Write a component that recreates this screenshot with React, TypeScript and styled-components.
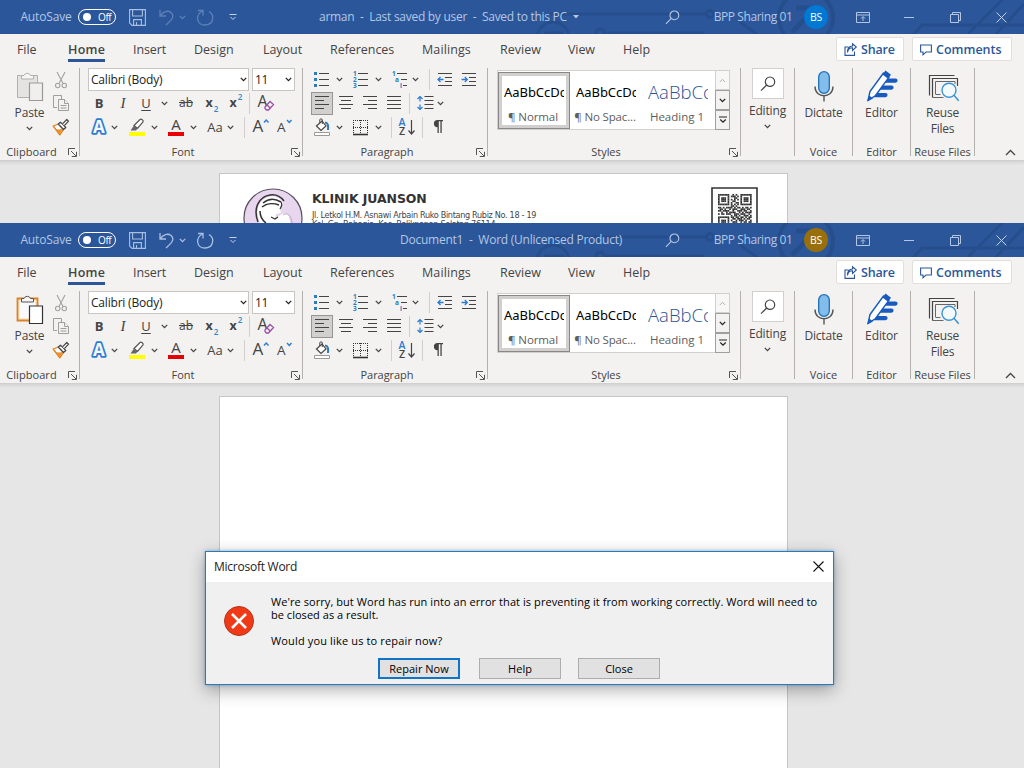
import React from "react";
import styled, { createGlobalStyle } from "styled-components";

const GlobalStyle = createGlobalStyle`
  *, *::before, *::after { box-sizing: border-box; }
  body { margin: 0; background: #e6e6e6; font-family: "Open Sans", "Noto Sans", sans-serif; color: #444; }
  svg { display: block; flex: none; overflow: visible; }
`;

const Desktop = styled.div`
  position: relative;
  width: 1024px;
  height: 768px;
  overflow: hidden;
`;

const WordWindow = styled.section<{ $h: number }>`
  display: flex;
  flex-direction: column;
  height: ${(p) => p.$h}px;
  overflow: hidden;
  background: #e6e6e6;
`;

/* Text with a tunable tracking */
const Txt = styled.span<{ $s?: number; $ls?: number; $c?: string; $b?: number; $lh?: number }>`
  font-size: ${(p) => p.$s ?? 12}px;
  letter-spacing: ${(p) => p.$ls ?? 0}px;
  color: ${(p) => p.$c ?? "#444"};
  font-weight: ${(p) => p.$b ?? 400};
  line-height: ${(p) => p.$lh ?? 16}px;
  white-space: pre;
`;

/* A fixed width slot in a toolbar row */
const Cell = styled.div<{ $w: number; $ml?: number; $start?: boolean }>`
  display: flex;
  align-items: center;
  justify-content: ${(p) => (p.$start ? "flex-start" : "center")};
  flex: none;
  width: ${(p) => p.$w}px;
  height: 100%;
  margin-left: ${(p) => p.$ml ?? 0}px;
  white-space: nowrap;
`;

/* ---------- title bar ---------- */
const TitleBar = styled.header`
  position: relative;
  display: flex;
  align-items: center;
  flex: none;
  height: 34px;
  background: #2b579a;
  overflow: hidden;
`;
const Pattern = styled.svg`
  position: absolute;
  left: 520px;
  top: 0;
`;
const BarItems = styled.div`
  position: relative;
  display: flex;
  align-items: center;
  width: 100%;
  height: 33px;
`;
const Toggle = styled.div`
  display: flex;
  align-items: center;
  gap: 7px;
  width: 38px;
  height: 16px;
  padding-left: 4px;
  border: 1px solid #fff;
  border-radius: 8px;
`;
const Knob = styled.i`
  width: 8px;
  height: 8px;
  border-radius: 50%;
  background: #fff;
`;
const Avatar = styled.div<{ $bg: string }>`
  display: flex;
  align-items: center;
  justify-content: center;
  width: 24px;
  height: 24px;
  border-radius: 50%;
  background: ${(p) => p.$bg};
`;

/* ---------- tabs ---------- */
const TabRow = styled.nav`
  display: flex;
  flex: none;
  height: 31px;
  padding-left: 17px;
  background: #f3f2f1;
`;
const TabSlot = styled.div<{ $w: number }>`
  width: ${(p) => p.$w}px;
  flex: none;
`;
const Tab = styled.div<{ $active?: boolean }>`
  display: flex;
  width: fit-content;
  height: 28px;
  padding-top: 8px;
  border-bottom: 3px solid ${(p) => (p.$active ? "#2b579a" : "transparent")};
`;
const Action = styled.button<{ $w: number; $ml: number }>`
  display: flex;
  align-items: center;
  gap: 4px;
  flex: none;
  width: ${(p) => p.$w}px;
  height: 24px;
  margin: 3px 0 0 ${(p) => p.$ml}px;
  padding: 1px 0 0 7px;
  border: 1px solid #e1dfdd;
  border-radius: 2px;
  background: #fff;
  font-family: inherit;
`;

/* ---------- ribbon ---------- */
const Ribbon = styled.div`
  display: flex;
  flex: none;
  height: 95px;
  padding-top: 3px;
  background: #f3f2f1;
`;
const Group = styled.div<{ $w: number; $pl?: number }>`
  display: flex;
  flex-direction: column;
  flex: none;
  width: ${(p) => p.$w}px;
  height: 92px;
  padding-left: ${(p) => p.$pl ?? 0}px;
`;
const Divider = styled.i`
  flex: none;
  width: 1px;
  height: 88px;
  background: #b3b0ad;
`;
const Row = styled.div<{ $h?: number }>`
  display: flex;
  align-items: center;
  flex: none;
  height: ${(p) => p.$h ?? 24}px;
`;
const Sep = styled.i<{ $ml: number }>`
  flex: none;
  width: 1px;
  height: 21px;
  margin-left: ${(p) => p.$ml}px;
  background: #d2d0ce;
`;
const Body = styled.div`
  flex: none;
  display: flex;
  height: 76px;
`;
const Footer = styled.div<{ $pr?: number; $indent?: number }>`
  display: grid;
  grid-template-columns: 1fr 9px;
  column-gap: 5px;
  align-items: center;
  height: 16px;
  margin-left: ${(p) => -(p.$indent ?? 0)}px;
  padding-right: ${(p) => p.$pr ?? 2}px;
  text-align: center;
`;
const PlainFooter = styled.div`
  height: 16px;
  display: flex;
  align-items: center;
  justify-content: center;
`;
const PasteButton = styled.div`
  display: flex;
  flex-direction: column;
  align-items: center;
  width: 58px;
  padding: 2px 0 0 1px;
`;
const ToolColumn = styled.div`
  display: flex;
  flex-direction: column;
  align-items: center;
  width: 18px;
  margin-left: -6px;
`;
const Combo = styled.div<{ $w: number; $ml?: number }>`
  display: flex;
  align-items: center;
  justify-content: space-between;
  flex: none;
  width: ${(p) => p.$w}px;
  height: 23px;
  margin-left: ${(p) => p.$ml ?? 0}px;
  padding: 0 0 0 2px;
  border: 1px solid #c8c6c4;
  background: #fff;
`;
const Pressed = styled.div`
  display: flex;
  align-items: center;
  justify-content: center;
  flex: none;
  width: 22px;
  height: 23px;
  border: 1px solid #979593;
  background: #d2d0ce;
`;
const Letter = styled.span<{ $s: number; $b?: boolean; $i?: boolean; $deco?: string }>`
  font-size: ${(p) => p.$s}px;
  line-height: 18px;
  font-weight: ${(p) => (p.$b ? 700 : 400)};
  font-style: ${(p) => (p.$i ? "italic" : "normal")};
  font-family: ${(p) => (p.$i ? '"Liberation Serif", serif' : "inherit")};
  text-decoration: ${(p) => p.$deco ?? "none"};
  text-underline-offset: 2px;
  color: #444;
`;
const Script = styled.span<{ $up?: boolean }>`
  align-self: ${(p) => (p.$up ? "flex-start" : "flex-end")};
  margin: ${(p) => (p.$up ? "1px 0 0 1px" : "0 0 1px 1px")};
  font-size: 8px;
  line-height: 10px;
  font-weight: 600;
  color: #2b88c8;
`;

const Gallery = styled.div`
  display: flex;
  width: 233px;
  height: 60px;
  margin-top: 2px;
  border: 1px solid #d2d0ce;
  background: #fff;
`;
const StyleCard = styled.div<{ $on?: boolean }>`
  display: flex;
  flex-direction: column;
  flex: none;
  width: 72px;
  height: 57px;
  margin-top: 1px;
  border: ${(p) => (p.$on ? "1px solid #8a8886" : "0 solid transparent")};
  box-shadow: ${(p) => (p.$on ? "inset 0 0 0 3px #d2d0ce" : "none")};
  padding: ${(p) => (p.$on ? "8px 5px 0" : "9px 6px 0")};
`;
const Sample = styled.div<{ $big?: boolean }>`
  height: 22px;
  overflow: hidden;
  white-space: nowrap;
  font-size: ${(p) => (p.$big ? 18.5 : 13)}px;
  letter-spacing: ${(p) => (p.$big ? 0 : -0.05)}px;
  line-height: 22px;
  font-family: ${(p) => (p.$big ? '"Open Sans"' : '"Noto Sans"')}, sans-serif;
  font-weight: ${(p) => (p.$big ? 300 : 400)};
  color: ${(p) => (p.$big ? "#2f5496" : "#000")};
`;
const StyleName = styled.div`
  display: flex;
  justify-content: center;
  height: 16px;
  margin: 6px -2px 0 -4px;
`;
const Scroller = styled.div`
  display: flex;
  flex-direction: column;
  width: 15px;
  height: 60px;
  margin: -1px -1px 0 auto;
`;
const ScrollBtn = styled.div<{ $off?: boolean }>`
  display: flex;
  align-items: center;
  justify-content: center;
  flex: 1;
  border: 1px solid ${(p) => (p.$off ? "#d2d0ce" : "#a19f9d")};
  background: ${(p) => (p.$off ? "#f8f7f6" : "#f3f2f1")};
`;
const BigButton = styled.div<{ $top: number }>`
  display: flex;
  flex-direction: column;
  align-items: center;
  height: 76px;
  padding-top: ${(p) => p.$top}px;
`;
const IconBox = styled.div`
  display: flex;
  align-items: center;
  justify-content: center;
  width: 32px;
  height: 31px;
  margin-bottom: 4px;
  border: 1px solid #d2d0ce;
  background: #fff;
`;
const Collapse = styled.div`
  display: flex;
  flex: 1;
  align-items: flex-end;
  justify-content: flex-end;
  padding: 0 8px 4px 0;
  height: 92px;
`;

/* ---------- work area ---------- */
const WorkArea = styled.main`
  flex: 1;
  min-height: 0;
  padding: 13px 0 0 219px;
  background: linear-gradient(#cdcdcd 0, #d9d9d9 2px, #e6e6e6 5px);
`;
const Page = styled.article`
  width: 569px;
  height: 800px;
  border: 1px solid #c6c6c6;
  background: #fff;
`;
const Letterhead = styled.div`
  display: flex;
  align-items: flex-start;
  padding: 13px 0 0 23px;
`;
const LetterText = styled.div`
  display: flex;
  flex-direction: column;
  width: 408px;
  padding: 3px 0 0 9px;
  font-family: "DejaVu Sans", sans-serif;
`;
const Address = styled(Txt)`
  font-family: "DejaVu Sans Condensed", "DejaVu Sans", sans-serif;
  font-stretch: condensed;
`;

/* ---------- dialog ---------- */
const Dialog = styled.div`
  position: absolute;
  left: 205px;
  top: 551px;
  width: 629px;
  height: 134px;
  border: 1px solid #2f7ab5;
  background: #f0f0f0;
  box-shadow: 0 5px 16px rgba(0, 0, 0, 0.32), 0 0 3px rgba(0, 120, 215, 0.45);
`;
const DialogTitle = styled.div`
  display: flex;
  align-items: center;
  justify-content: space-between;
  height: 30px;
  padding: 0 9px 1px 8px;
  background: #fff;
`;
const DialogBody = styled.div`
  display: flex;
  gap: 17px;
  height: 76px;
  padding: 13px 0 0 18px;
`;
const Message = styled.div`
  display: flex;
  flex-direction: column;
`;
const Gap = styled.div`
  height: 13px;
`;
const Buttons = styled.div`
  display: flex;
  padding-left: 172px;
`;
const DialogButton = styled.button<{ $primary?: boolean; $mr: number }>`
  width: 82px;
  height: 21px;
  margin-right: ${(p) => p.$mr}px;
  padding: 0;
  display: flex;
  align-items: center;
  justify-content: center;
  border: ${(p) => (p.$primary ? "2px solid #0f75c8" : "1px solid #adadad")};
  background: #e1e1e1;
  font-family: inherit;
`;

/* ---------- icons ---------- */
const Chev = ({ c = "#444" }: { c?: string }) => (
  <svg width="7" height="5" viewBox="0 0 7 5" fill="none" stroke={c} strokeWidth="1.3"><path d="M.8.9 3.5 3.6 6.2.9" /></svg>
);
const Launcher = () => (
  <svg width="9" height="9" viewBox="0 0 9 9" fill="none" stroke="#555" strokeWidth="1"><path d="M.5 7V.5H7M3 3l5 5M8.500 3.800V8.500H3.800" /></svg>
);
const PasteIcon = ({ on }: { on: boolean }) => (
  <svg width="28" height="32" viewBox="0 0 28 32" fill="none">
    <path d="M1.500 5.500h20v22h-20z" fill={on ? "#fdebc8" : "#e4e3e2"} stroke={on ? "#d9822b" : "#b1b0ae"} strokeWidth={on ? 1.800 : 1} />
    {on && <path d="M4 8h15v17H4z" fill="#fafafa" />}
    <path d="M5.500 9V5.500H8a3.500 3.500 0 0 1 6.500 0h3V9z" fill="#f6f5f4" stroke={on ? "#555" : "#b1b0ae"} />
    <path d="M13.500 13h13v17.500h-13z" fill={on ? "#fff" : "#f0efee"} stroke={on ? "#333" : "#999"} strokeWidth="1.200" />
  </svg>
);
const CutIcon = () => (
  <svg width="16" height="18" viewBox="0 0 16 18" fill="none" stroke="#a3a1a0" strokeWidth="1.100"><path d="M4 1l6 11.500M12 1 6 12.500" /><circle cx="4.700" cy="14.500" r="2.200" /><circle cx="11.300" cy="14.500" r="2.200" /></svg>
);
const CopyIcon = () => (
  <svg width="18" height="18" viewBox="0 0 18 18" fill="#f3f2f1" stroke="#a09e9c"><path d="M5 13.500H1.500v-12h8V5" /><path d="M6.500 5.500h6l4 4v7h-10z" /><path d="M12.500 5.500v4h4M8.500 11.500h6M8.500 14h6" /></svg>
);
const BrushIcon = () => (
  <svg width="18" height="18" viewBox="0 0 18 18" fill="none" strokeLinejoin="round">
    <path d="M1.200 8 6.500 6l5 5.500-3.700 5.300Z" fill="#fff" stroke="#e07b1a" strokeWidth="1.300" />
    <path d="m3.500 11 3 .5 4.500-.5-3.200 5.300Z" fill="#e8912f" />
    <path d="m6.300 6 2.200-1.800 5.300 5.300-2.300 2Z" fill="#fff" stroke="#444" strokeWidth="1.200" />
    <path d="m10.500 5.800 4.300-4.300 1.700 1.700-4.200 4.500" fill="#fff" stroke="#444" strokeWidth="1.200" />
  </svg>
);
const GlyphA = styled.text<{ $s: number }>`
  font: 400 ${(p) => p.$s}px "Open Sans", sans-serif;
  fill: #444;
`;
const GlowA = styled.text`
  font: 700 17px "Open Sans", sans-serif;
  fill: #f4faff;
  stroke: #2b7cd3;
  stroke-width: 3.6px;
  paint-order: stroke;
  stroke-linejoin: round;
`;
const EraserA = () => (
  <svg width="18" height="18" viewBox="0 0 18 18" fill="none"><GlyphA $s={16} x="0.500" y="13">A</GlyphA><path d="m8 13 5-5.500 3.500 3-5 5.500H9.500L8 14.500Z" stroke="#9b4fa5" strokeWidth="1.300" fill="#f3f2f1" /><path d="m10 11 3.300 3" stroke="#9b4fa5" strokeWidth="1.300" /></svg>
);
const EffectsA = () => (
  <svg width="18" height="18" viewBox="0 0 18 18"><GlowA x="2.900" y="15">A</GlowA></svg>
);
const HighlightIcon = () => (
  <svg width="18" height="18" viewBox="0 0 18 18" fill="none"><path d="M1 14h16v4H1z" fill="#ff0" /><path d="m6 7.500 6-6c1-.9 4 1 3 2.500l-5.500 6.500Z" fill="#fff" stroke="#555" strokeWidth="1.200" /><path d="M6 7.500 9.500 10.500 8 12.500H2.500Z" fill="#666" /></svg>
);
const FontColorIcon = () => (
  <svg width="18" height="18" viewBox="0 0 18 18"><path d="M1 14h16v4H1z" fill="#e80000" /><GlyphA $s={15} x="4.300" y="12">A</GlyphA></svg>
);
const SizeA = ({ up }: { up: boolean }) => (
  <svg width="19" height="18" viewBox="0 0 19 18" fill="none">
    <GlyphA $s={up ? 17 : 13.500} x={up ? 0.500 : 1} y="14">A</GlyphA>
    <path d={up ? "m12 4.500 2.200-2.500 2.300 2.500" : "m11 2 2.300 2.500L15.500 2"} stroke="#2b7cd3" strokeWidth="1.400" />
  </svg>
);
const BulletsIcon = () => (
  <svg width="16" height="16" viewBox="0 0 16 16"><path d="M0 0h3v3H0zM0 6h3v3H0zM0 12h3v3H0z" fill="#2b7cb8" /><path d="M5 1.500h10M5 7.500h10M5 13.500h10" stroke="#444" /></svg>
);
const Tiny = styled.text`
  font: 700 6.5px "Open Sans", sans-serif;
  fill: #2b7cb8;
`;
const NumberIcon = () => (
  <svg width="16" height="17" viewBox="0 0 16 17"><Tiny x="0" y="5">1</Tiny><Tiny x="0" y="11">2</Tiny><Tiny x="0" y="17">3</Tiny><path d="M5 2.500h10M5 8.500h10M5 14.500h10" stroke="#444" /></svg>
);
const MultiIcon = () => (
  <svg width="16" height="17" viewBox="0 0 16 17"><Tiny x="0" y="5">1</Tiny><Tiny x="3" y="11">a</Tiny><Tiny x="8" y="17">i</Tiny><path d="M5 2.500h10M9 8.500h6M11 14.500h4" stroke="#444" /></svg>
);
const IndentIcon = ({ flip }: { flip?: boolean }) => (
  <svg width="16" height="16" viewBox="0 0 16 16" fill="none"><path d="M1 1.500h14M8 5.500h7M8 9.500h7M1 13.500h14" stroke="#444" /><path d={flip ? "M.5 7.500H6M3.800 5l2.500 2.500L3.800 10" : "M1 7.500h5.500M3.500 5 1 7.500 3.500 10"} stroke="#2b7cd3" strokeWidth="1.300" /></svg>
);
const AlignIcon = ({ d }: { d: string }) => (
  <svg width="16" height="16" viewBox="0 0 16 16" stroke="#444"><path d={d} /></svg>
);
const SpacingIcon = () => (
  <svg width="17" height="16" viewBox="0 0 17 16" fill="none"><path d="M3 1.500v5M3 9.500v5M.5 4 3 1.500 5.500 4M.5 12 3 14.500 5.500 12" stroke="#2b7cd3" strokeWidth="1.200" /><path d="M7.500 1.500h9M7.500 5.500h9M7.500 9.500h9M7.500 13.500h9" stroke="#444" /></svg>
);
const BucketIcon = () => (
  <svg width="18" height="18" viewBox="0 0 18 18" fill="none"><path d="M1.500 14.500h15v3h-15z" fill="#fff" stroke="#999" /><path d="m3.500 8 5.500-5 4 5-5 4.500Z" fill="#fff" stroke="#444" strokeWidth="1.200" /><path d="M6.800 5V1.800c0-1.300 2.500-1.300 2.500 0V6" stroke="#444" /><path d="M12 4.500c3 0 3.500 3 3 7.500" stroke="#2b7cb8" strokeWidth="2" /></svg>
);
const BordersIcon = () => (
  <svg width="16" height="17" viewBox="0 0 16 17" stroke="#333"><path d="M0 1.500h15M.5 1v14M14.500 1v14M7.500 1v14M0 8.500h15" strokeDasharray="1 1" /><path d="M0 15.500h15" strokeWidth="1.600" /></svg>
);
const Sorter = styled.text<{ $c: string }>`
  font: 600 10.5px "Open Sans", sans-serif;
  fill: ${(p) => p.$c};
`;
const SortIcon = () => (
  <svg width="18" height="18" viewBox="0 0 18 18" fill="none"><Sorter $c="#2b7cd3" x="0.500" y="8">A</Sorter><Sorter $c="#444" x="1" y="17">Z</Sorter><path d="M13.500 2v14M10.500 12.500l3 3.500 3-3.500" stroke="#444" strokeWidth="1.200" /></svg>
);
const PilcrowIcon = () => (
  <svg width="12" height="14" viewBox="0 0 12 14"><path d="M5.500 0H11v1.200H9.700V13H8.400V1.200H6.800V13H5.500V7.200a3.600 3.600 0 0 1 0-7.200Z" fill="#444" /></svg>
);
const Glass = ({ c, s = 16, w = 1.2 }: { c: string; s?: number; w?: number }) => (
  <svg width={s} height={s} viewBox="0 0 16 16" fill="none" stroke={c} strokeWidth={w}><circle cx="10" cy="5.700" r="4.700" /><path d="M6.700 9 1 14.700" /></svg>
);
const MicIcon = () => (
  <svg width="20" height="31" viewBox="0 0 20 31" fill="none"><rect x="4.700" y=".7" width="10.600" height="21.600" rx="5.300" fill="#83bdec" stroke="#1f6fb5" strokeWidth="1.300" /><path d="M1 15.500c0 12.300 18 12.300 18 0M10 25v5.500" stroke="#555" strokeWidth="1.400" /></svg>
);
const EditorIcon = () => (
  <svg width="32" height="32" viewBox="0 0 32 32" fill="none">
    <path d="M20 8.500h9.500a2.100 2.100 0 0 1 0 4.200H17zM16 15.500h9.500a2.100 2.100 0 0 1 0 4.200H13zM11 23h8.500a2.100 2.100 0 0 1 0 4.200H7z" fill="#185abd" />
    <path d="M2 30.500 4 21.500 17.500 3l5.500 4.200L9.500 25.500Z" fill="#fff" stroke="#185abd" strokeWidth="1.400" strokeLinejoin="round" />
    <path d="m16.500 4.500 3-4 5.500 4.200-3 4ZM1 31.500l2.200-6 3.800 3Z" fill="#185abd" />
  </svg>
);
const ReuseIcon = () => (
  <svg width="32" height="30" viewBox="0 0 32 30" fill="none"><path d="M2.500 22.500V2.500H27.500M5.500 24.500V5.500H30.500V13" stroke="#444" strokeWidth="1.200" /><path d="M8.500 21v-12.500h19.500V11M5.500 24.500h11M8.500 21.500h5" stroke="#666" /><circle cx="22" cy="17.300" r="7" stroke="#3a93d6" strokeWidth="1.400" fill="#f3f9fd" /><path d="m27 22.300 4.700 5.500" stroke="#3a93d6" strokeWidth="1.500" /></svg>
);
const SaveIcon = () => (
  <svg width="17" height="17" viewBox="0 0 17 17" fill="none" stroke="#a9bee0" strokeWidth="1.100"><path d="M.6.600H16.400V16.400H3L.6 14ZM3.600.600V7H13.400V.600M4.600 16.400V10.600H12.400V16.400M7.500 16v-3" /></svg>
);
const UndoIcon = ({ c }: { c: string }) => (
  <svg width="16" height="17" viewBox="0 0 16 17" fill="none" stroke={c} strokeWidth="1.300"><path d="M1 1v6h6M1.300 6.700C4 2.500 9 1 12 3.500c4.500 4 0 8-5 12.500" /></svg>
);
const RedoIcon = ({ c }: { c: string }) => (
  <svg width="18" height="17" viewBox="0 0 18 17" fill="none" stroke={c} strokeWidth="1.300"><path d="M2 1.500h5v5M6.500 2C-1 6 .5 16 9 16c8 0 10.500-9.500 4-13.500" /></svg>
);
const ShareIcon = () => (
  <svg width="13" height="13" viewBox="0 0 13 13" fill="none" stroke="#2b579a" strokeWidth="1.100"><path d="M4.500 4H1v8.400h9.500V8.500M3.500 9.500C4 6 6 4.700 8.500 4.700V7.500L12.300 4 8.500.800V3C5 3 3.300 6 3.500 9.500Z" /></svg>
);
const CommentIcon = () => (
  <svg width="12" height="12" viewBox="0 0 12 12" fill="none" stroke="#2b579a" strokeWidth="1.100"><path d="M.6 1h10.800v7H6L3 10.800V8H.6Z" /></svg>
);
const Circuit = () => (
  <Pattern width="504" height="34" viewBox="0 0 504 34" fill="none" stroke="#264e8c" strokeWidth="3">
    <circle cx="33" cy="38" r="16" /><path d="M24 33h20M24 38h20" />
    <path d="M30 14h156" /><circle cx="190" cy="14" r="3.500" />
    <circle cx="80" cy="33" r="4" /><path d="M84 33h100" />
    <path d="m220 22 18 13" />
    <circle cx="286" cy="18" r="27" strokeWidth="4" /><path d="m272 32 20-20M276 8h18v18" strokeWidth="5" />
    <path d="M392 36l10-11h102M448 34l34-34M476 34l28-30" />
  </Pattern>
);

const LogoArt = () => (
  <svg width="60" height="60" viewBox="0 0 60 60" fill="none">
    <circle cx="30" cy="31" r="29" fill="#e8d5ee" stroke="#55505a" strokeWidth="1.200" />
    <path d="M17 36c-5-12-2-21 6-25 6-3 14-1 17 5l-3 5 1 5-5 1-1 5 7-5c7-2 8 4 8 10Z" fill="#fff" />
    <path d="M15 35c-5-13 0-25 12-27 6-1 11 2 14 6M20 16c6-5 13-4 18-1M19 20c5-4 12-4 17-2M17 24c0 5 2 9 6 12" stroke="#333" strokeWidth="1.500" />
    <path d="M38 15c2 3 0 5-1 7M28 30l4 2 3-2" stroke="#333" strokeWidth="1.200" />
    <path d="M40 28c4-3 8 0 9 8" stroke="#b9a8bd" />
  </svg>
);

const qrRows = [
  "111111100101001111111",
  "100000101110101000001",
  "101110100011001011101",
  "101110101010101011101",
  "101110100110001011101",
  "100000101001101000001",
  "111111101010101111111",
  "000000001101000000000",
  "110101111010110101101",
  "011010010111001110110",
  "110111100100111011001",
  "001001011110010101111",
  "101101110011101110010",
  "000000001011010011101",
  "111111101101101101011",
  "100000100110111010110",
  "101110101001011101001",
  "101110100111001011011",
];
const QrArt = () => (
  <svg width="48" height="48" viewBox="0 0 48 48">
    <path d="M1 60V1h45v59" fill="none" stroke="#333" strokeWidth="1.600" />
    <g fill="#333" transform="translate(7 7) scale(1.600)">
      {qrRows.map((r, y) => [...r].map((v, x) => (v === "1" ? <rect key={`${x}-${y}`} x={x} y={y} width="1.050" height="1.050" /> : null)))}
    </g>
  </svg>
);

/* ---------- composition ---------- */
const tabs: [string, number, number][] = [
  ["File", 51, -0.1], ["Home", 65, 0.25], ["Insert", 61, -0.1], ["Design", 69, 0], ["Layout", 67, -0.05],
  ["References", 92, -0.05], ["Mailings", 78, 0.1], ["Review", 68, 0], ["View", 55, -0.1], ["Help", 60, 0],
];

type HeadProps = { title: React.ReactNode; titleOffset: number; avatar: string; active: boolean };

const Head = ({ title, titleOffset, avatar, active }: HeadProps) => {
  const dim = active ? "#a9bee0" : "#5d80b9";
  return (
    <TitleBar>
      <Circuit />
      <BarItems>
        <Cell $w={50} $ml={21}><Txt $s={12} $ls={-0.15} $c="#b4c6e4">AutoSave</Txt></Cell>
        <Cell $w={38} $ml={7}><Toggle><Knob /><Txt $s={10} $ls={-0.4} $c="#fff">Off</Txt></Toggle></Cell>
        <Cell $w={17} $ml={13}><SaveIcon /></Cell>
        <Cell $w={16} $ml={13}><UndoIcon c={dim} /></Cell>
        <Cell $w={8} $ml={3}><Chev c={dim} /></Cell>
        <Cell $w={18} $ml={10}><RedoIcon c={dim} /></Cell>
        <Cell $w={10} $ml={14}>
          <svg width="8" height="7" viewBox="0 0 8 7" fill="none" stroke="#c3d1ea"><path d="M.5.500h7M1.500 3 4 5.500 6.500 3" /></svg>
        </Cell>
        <Cell $w={426 - titleOffset} $ml={titleOffset} $start>{title}</Cell>
        <Cell $w={16}><Glass c="#b4c6e4" s={15} /></Cell>
        <Cell $w={78} $ml={34}><Txt $s={12} $ls={-0.42} $c="#b4c6e4" $lh={14}>BPP Sharing 01</Txt></Cell>
        <Cell $w={24} $ml={12}><Avatar $bg={avatar}><Txt $s={10.5} $ls={-0.3} $c="#fff">BS</Txt></Avatar></Cell>
        <Cell $w={14} $ml={28}>
          <svg width="14" height="11" viewBox="0 0 14 11" fill="none" stroke="#b4c6e4"><path d="M.5.500h13v10H.5ZM.5 3h13M7 9V5M5 6.500l2-2 2 2" /></svg>
        </Cell>
        <Cell $w={11} $ml={34}><svg width="11" height="3" viewBox="0 0 11 3"><path d="M0 1h10v1H0z" fill="#b4c6e4" /></svg></Cell>
        <Cell $w={11} $ml={35}>
          <svg width="11" height="11" viewBox="0 0 11 11" fill="none" stroke="#b4c6e4"><path d="M.5 2.500h8v8h-8zM2.500 2.500v-2h8v8h-2" /></svg>
        </Cell>
        <Cell $w={11} $ml={35}><svg width="11" height="11" viewBox="0 0 11 11" fill="none" stroke="#c3d1ea"><path d="m.5.500 10 10M10.500.500l-10 10" /></svg></Cell>
      </BarItems>
    </TitleBar>
  );
};

const RibbonView = ({ canPaste }: { canPaste: boolean }) => (
  <Ribbon>
    <Group $w={79}>
      <Body>
        <PasteButton>
          <PasteIcon on={canPaste} />
          <Txt $ls={-0.15} $lh={22}>Paste</Txt>
          <Row $h={9}><Chev /></Row>
        </PasteButton>
        <ToolColumn>
          <Row $h={23}><CutIcon /></Row>
          <Row><CopyIcon /></Row>
          <Row><BrushIcon /></Row>
        </ToolColumn>
      </Body>
      <Footer><Txt $s={11} $ls={0.05}>Clipboard</Txt><Launcher /></Footer>
    </Group>
    <Divider />
    <Group $w={222} $pl={8}>
      <Row $h={23}>
        <Combo $w={161}><Txt $ls={-0.2} $c="#222">Calibri (Body)</Txt><Cell $w={9}><Chev c="#222" /></Cell></Combo>
        <Combo $w={43} $ml={3}><Txt $ls={-0.4} $c="#222">11</Txt><Cell $w={11}><Chev c="#222" /></Cell></Combo>
      </Row>
      <Row>
        <Cell $w={22}><Letter $s={13} $b>B</Letter></Cell>
        <Cell $w={22} $ml={2}><Letter $s={15} $i>I</Letter></Cell>
        <Cell $w={20} $ml={2}><Letter $s={13} $deco="underline">U</Letter></Cell>
        <Cell $w={10} $ml={3}><Chev /></Cell>
        <Cell $w={20} $ml={7}><Letter $s={12} $deco="line-through">ab</Letter></Cell>
        <Cell $w={20} $ml={6}><Letter $s={12.5} $b>x</Letter><Script>2</Script></Cell>
        <Cell $w={20} $ml={4}><Letter $s={12.5} $b>x</Letter><Script $up>2</Script></Cell>
        <Sep $ml={3} />
        <Cell $w={20} $ml={6}><EraserA /></Cell>
      </Row>
      <Row>
        <Cell $w={20} $ml={1}><EffectsA /></Cell>
        <Cell $w={10}><Chev /></Cell>
        <Cell $w={20} $ml={8}><HighlightIcon /></Cell>
        <Cell $w={10} $ml={2}><Chev /></Cell>
        <Cell $w={20} $ml={7}><FontColorIcon /></Cell>
        <Cell $w={10} $ml={2}><Chev /></Cell>
        <Cell $w={20} $ml={7}><Letter $s={13}>Aa</Letter></Cell>
        <Cell $w={10}><Chev /></Cell>
        <Sep $ml={9} />
        <Cell $w={20} $ml={6}><SizeA up /></Cell>
        <Cell $w={20} $ml={4}><SizeA up={false} /></Cell>
      </Row>
      <Row $h={5} />
      <Footer $indent={8}><Txt $s={11}>Font</Txt><Launcher /></Footer>
    </Group>
    <Divider />
    <Group $w={184} $pl={8}>
      <Row $h={23}>
        <Cell $w={16} $ml={3}><BulletsIcon /></Cell>
        <Cell $w={10} $ml={4}><Chev /></Cell>
        <Cell $w={16} $ml={9}><NumberIcon /></Cell>
        <Cell $w={10} $ml={4}><Chev /></Cell>
        <Cell $w={16} $ml={9}><MultiIcon /></Cell>
        <Cell $w={10} $ml={2}><Chev /></Cell>
        <Sep $ml={9} />
        <Cell $w={16} $ml={7}><IndentIcon /></Cell>
        <Cell $w={16} $ml={8}><IndentIcon flip /></Cell>
      </Row>
      <Row>
        <Pressed><AlignIcon d="M1 1.500h14M1 5.500h9M1 9.500h14M1 13.500h9" /></Pressed>
        <Cell $w={16} $ml={5}><AlignIcon d="M1 1.500h14M3 5.500h10M1 9.500h14M3 13.500h10" /></Cell>
        <Cell $w={16} $ml={8}><AlignIcon d="M1 1.500h14M6 5.500h9M1 9.500h14M6 13.500h9" /></Cell>
        <Cell $w={16} $ml={8}><AlignIcon d="M1 1.500h14M1 5.500h14M1 9.500h14M1 13.500h14" /></Cell>
        <Sep $ml={7} />
        <Cell $w={17} $ml={7}><SpacingIcon /></Cell>
        <Cell $w={10} $ml={1}><Chev /></Cell>
      </Row>
      <Row>
        <Cell $w={18} $ml={2}><BucketIcon /></Cell>
        <Cell $w={10} $ml={3}><Chev /></Cell>
        <Cell $w={16} $ml={9}><BordersIcon /></Cell>
        <Cell $w={10} $ml={4}><Chev /></Cell>
        <Sep $ml={8} />
        <Cell $w={18} $ml={6}><SortIcon /></Cell>
        <Sep $ml={6} />
        <Cell $w={14} $ml={8}><PilcrowIcon /></Cell>
      </Row>
      <Row $h={5} />
      <Footer $indent={8}><Txt $s={11} $ls={-0.05}>Paragraph</Txt><Launcher /></Footer>
    </Group>
    <Divider />
    <Group $w={252} $pl={9}>
      <Body>
        <Gallery>
          <StyleCard $on><Sample>AaBbCcDc</Sample><StyleName><Txt $s={11.5} $ls={-0.1} $c="#605e5c">¶ Normal</Txt></StyleName></StyleCard>
          <StyleCard><Sample>AaBbCcDc</Sample><StyleName><Txt $s={11.5} $ls={-0.15} $c="#605e5c">¶ No Spac...</Txt></StyleName></StyleCard>
          <StyleCard><Sample $big>AaBbCc</Sample><StyleName><Txt $s={11.5} $ls={0} $c="#605e5c">Heading 1</Txt></StyleName></StyleCard>
          <Scroller>
            <ScrollBtn $off><svg width="7" height="5" viewBox="0 0 7 5" fill="none" stroke="#b3b0ad"><path d="M.8 4 3.500 1.300 6.200 4" /></svg></ScrollBtn>
            <ScrollBtn><Chev c="#222" /></ScrollBtn>
            <ScrollBtn><svg width="8" height="8" viewBox="0 0 8 8" fill="none" stroke="#222" strokeWidth="1.200"><path d="M0 1h8M1.300 3.500 4 6.200l2.700-2.700" /></svg></ScrollBtn>
          </Scroller>
        </Gallery>
      </Body>
      <Footer $indent={9}><Txt $s={11} $ls={-0.05}>Styles</Txt><Launcher /></Footer>
    </Group>
    <Divider />
    <Group $w={53}>
      <BigButton $top={0}>
        <IconBox><Glass c="#444" s={16} /></IconBox>
        <Txt $ls={-0.15}>Editing</Txt>
        <Row $h={14}><Chev /></Row>
      </BigButton>
    </Group>
    <Divider />
    <Group $w={57}>
      <BigButton $top={3}><MicIcon /><Txt $ls={-0.2} $lh={22}>Dictate</Txt></BigButton>
      <PlainFooter><Txt $s={11}>Voice</Txt></PlainFooter>
    </Group>
    <Divider />
    <Group $w={57}>
      <BigButton $top={2}><EditorIcon /><Txt $ls={-0.1} $lh={22}>Editor</Txt></BigButton>
      <PlainFooter><Txt $s={11}>Editor</Txt></PlainFooter>
    </Group>
    <Divider />
    <Group $w={63}>
      <BigButton $top={5}><ReuseIcon /><Txt $ls={-0.2} $lh={20}>Reuse</Txt><Txt $ls={-0.2} $lh={12}>Files</Txt></BigButton>
      <PlainFooter><Txt $s={11} $ls={0}>Reuse Files</Txt></PlainFooter>
    </Group>
    <Divider />
    <Collapse><svg width="11" height="7" viewBox="0 0 11 7" fill="none" stroke="#444" strokeWidth="1.300"><path d="M1 6l4.500-4.500L10 6" /></svg></Collapse>
  </Ribbon>
);

type WinProps = HeadProps & { height: number; children?: React.ReactNode };

const WordApp = ({ height, children, ...head }: WinProps) => (
  <WordWindow $h={height}>
    <Head {...head} />
    <TabRow>
      {tabs.map(([name, w, ls]) => (
        <TabSlot key={name} $w={w}>
          <Tab $active={name === "Home"}>
            <Txt $s={12.5} $ls={ls} $b={name === "Home" ? 600 : 400}>{name}</Txt>
          </Tab>
        </TabSlot>
      ))}
      <Action $w={68} $ml={153}><ShareIcon /><Txt $s={12.5} $ls={-0.2} $b={600} $c="#2b579a">Share</Txt></Action>
      <Action $w={100} $ml={8}><CommentIcon /><Txt $s={12.5} $ls={0} $b={600} $c="#2b579a">Comments</Txt></Action>
    </TabRow>
    <RibbonView canPaste={head.active} />
    <WorkArea><Page>{children}</Page></WorkArea>
  </WordWindow>
);

export default function App() {
  return (
    <Desktop>
      <GlobalStyle />
      <WordApp
        height={223}
        active={false}
        avatar="#0078d4"
        titleOffset={81}
        title={
          <>
            <Txt $ls={-0.28} $c="#b4c6e4">{"arman  -  Last saved by user  -  Saved to this PC"}</Txt>
            <Cell $w={18}><svg width="6" height="4" viewBox="0 0 6 4"><path d="M0 0h6L3 3.500Z" fill="#b4c6e4" /></svg></Cell>
          </>
        }
      >
        <Letterhead>
          <LogoArt />
          <LetterText>
            <Txt $s={12.5} $ls={-0.1} $b={700} $c="#333" $lh={18}>KLINIK JUANSON</Txt>
            <Address $s={9} $ls={-0.31} $c="#444" $lh={14}>Jl. Letkol H.M. Asnawi Arbain Ruko Bintang Rubiz No. 18 - 19</Address>
            <Address $s={9} $ls={-0.31} $c="#444" $lh={4}>Kel. Gn. Bahagia, Kec. Balikpapan Selatan 76114</Address>
          </LetterText>
          <QrArt />
        </Letterhead>
      </WordApp>
      <WordApp
        height={545}
        active
        avatar="#986f0b"
        titleOffset={162}
        title={<Txt $ls={-0.24} $c="#b4c6e4">{"Document1  -  Word (Unlicensed Product)"}</Txt>}
      />
      <Dialog>
        <DialogTitle>
          <Txt $ls={-0.25} $c="#222" $lh={17}>Microsoft Word</Txt>
          <svg width="11" height="11" viewBox="0 0 11 11" stroke="#111" strokeWidth="1.100"><path d="m.5.500 10 10M10.500.500l-10 10" /></svg>
        </DialogTitle>
        <DialogBody>
          <Row $h={52}>
            <svg width="30" height="30" viewBox="0 0 30 30"><circle cx="15" cy="15" r="14.500" fill="#f03a17" stroke="#b5321a" /><path d="m8 8 14 14M22 8 8 22" stroke="#fff" strokeWidth="2.500" /></svg>
          </Row>
          <Message>
            <Txt $s={11} $ls={0.07} $c="#000" $lh={13}>We're sorry, but Word has run into an error that is preventing it from working correctly. Word will need to</Txt>
            <Txt $s={11} $ls={0.03} $c="#000" $lh={13}>be closed as a result.</Txt>
            <Gap />
            <Txt $s={11} $ls={0.15} $c="#000" $lh={13}>Would you like us to repair now?</Txt>
          </Message>
        </DialogBody>
        <Buttons>
          <DialogButton $primary $mr={19}><Txt $s={11} $c="#000">Repair Now</Txt></DialogButton>
          <DialogButton $mr={17}><Txt $s={11} $c="#000">Help</Txt></DialogButton>
          <DialogButton $mr={0}><Txt $s={11} $c="#000">Close</Txt></DialogButton>
        </Buttons>
      </Dialog>
    </Desktop>
  );
}
